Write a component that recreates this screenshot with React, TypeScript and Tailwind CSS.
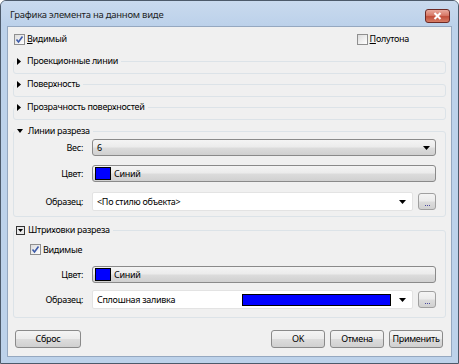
import React from "react";

const font = { fontFamily: '"Noto Sans", "Open Sans", sans-serif' };

function Check({ checked }: { checked?: boolean }) {
  return (
    <span className="inline-flex h-[11px] w-[11px] shrink-0 items-center justify-center border border-[#8f8f8f] bg-[linear-gradient(135deg,#dcdcdc,#ffffff)]">
      {checked && (
        <svg width="9" height="9" viewBox="0 0 9 9">
          <path d="M1.5 4.5 L3.5 7 L7.5 1.5" stroke="#3d5ba9" strokeWidth="1.6" fill="none" />
        </svg>
      )}
    </span>
  );
}

function Arrow() {
  return (
    <svg width="7" height="4" viewBox="0 0 7 4" className="shrink-0">
      <path d="M0 0 H7 L3.5 4 Z" fill="#000" />
    </svg>
  );
}

const btnBg =
  "bg-[linear-gradient(to_bottom,#f4f4f4_0%,#ebebeb_48%,#dcdcdc_52%,#d0d0d0_100%)] border border-[#8a8a8a] rounded-[3px]";

function Ellipsis() {
  return (
    <div className={`flex h-[17px] w-[18px] shrink-0 items-end justify-center pb-[3px] ${btnBg} border-[#a0a0a0]`}>
      <span className="flex gap-[1px]">
        <span className="h-[1px] w-[1px] bg-[#4a4aa0]" />
        <span className="h-[1px] w-[1px] bg-[#4a4aa0]" />
        <span className="h-[1px] w-[1px] bg-[#4a4aa0]" />
      </span>
    </div>
  );
}

function Label({ children }: { children: React.ReactNode }) {
  return <div className="w-[70px] shrink-0 pr-[1px] text-right">{children}</div>;
}

function Collapsed({ title, className = "" }: { title: string; className?: string }) {
  return (
    <fieldset className={`rounded-[3px] border border-[#dce3e8] ${className}`}>
      <legend className="ml-[1px] flex h-[12px] items-center pl-[2px] pr-[3px] leading-[12px]">
        <svg width="4" height="7" viewBox="0 0 4 7" className="mr-[6px]">
          <path d="M0 0 L4 3.5 L0 7 Z" fill="#000" />
        </svg>
        {title}
      </legend>
      <div className="h-[6px]" />
    </fieldset>
  );
}

export default function App() {
  return (
    <div className="h-[364px] w-[459px] text-[9px] tracking-[-0.3px] text-black" style={font}>
      <div className="flex h-full w-full flex-col rounded-t-[6px] border border-[#4d5a6a] bg-[#bdd2ea] px-[6px] pb-[6px]">
        {/* Title bar */}
        <div className="flex h-[25px] shrink-0 items-start bg-[linear-gradient(to_bottom,#c9daee,#bcd1ea)] -mx-[6px] px-[9px] rounded-t-[5px]">
          <div className="mt-[7px] text-[9.5px] leading-[14px] tracking-[-0.25px] text-[#1e1e1e]">Графика элемента на данном виде</div>
          <div className="ml-auto mr-[-1px] mt-[8px] flex h-[14px] w-[25px] items-center justify-center rounded-[3px] border border-[#6d2a25] bg-[linear-gradient(to_bottom,#e9a99c_0%,#d87a68_45%,#c24f3b_55%,#d77d66_100%)]">
            <svg width="9" height="8" viewBox="0 0 9 8">
              <path d="M1.5 1 L7.5 7 M7.5 1 L1.5 7" stroke="#fff" strokeWidth="2" />
            </svg>
          </div>
        </div>
        {/* Client */}
        <div className="flex flex-1 flex-col border border-[#95a8c0] bg-[#f0f0f0] px-[5px]">
          <div className="mt-[6px] flex h-[12px] items-center">
            <div className="ml-[1px] flex items-center gap-[2px]">
              <Check checked />
              <span>
                <span className="underline">В</span>идимый
              </span>
            </div>
            <div className="ml-auto mr-[37px] flex items-center gap-[2px]">
              <Check />
              <span>
                <span className="underline">П</span>олутона
              </span>
            </div>
          </div>

          <Collapsed title="Проекционные линии" className="mt-[10px]" />
          <Collapsed title="Поверхность" className="mt-[4px]" />
          <Collapsed title="Прозрачность поверхностей" className="mt-[4px]" />

          {/* Линии разреза */}
          <fieldset className="mt-[5px] rounded-[3px] border border-[#dce3e8]">
            <legend className="ml-[1px] flex h-[12px] items-center pl-[2px] pr-[3px] leading-[12px]">
              <svg width="6" height="4" viewBox="0 0 6 4" className="mr-[5px]">
                <path d="M0 0 H6 L3 4 Z" fill="#000" />
              </svg>
              Линии разреза
            </legend>
            <div className="flex flex-col pb-[5px] pr-[9px]">
              <div className="mt-[2px] flex h-[17px] items-center gap-[8px]">
                <Label>Вес:</Label>
                <div className={`flex h-[17px] flex-1 items-center pl-[4px] pr-[5px] ${btnBg}`}>
                  <span>6</span>
                  <span className="ml-auto">
                    <Arrow />
                  </span>
                </div>
              </div>
              <div className="mt-[9px] flex h-[17px] items-center gap-[8px]">
                <Label>Цвет:</Label>
                <div className={`flex h-[17px] flex-1 items-center pl-[2px] ${btnBg}`}>
                  <span className="h-[13px] w-[16px] border border-[#000] bg-[#0000ff]" />
                  <span className="ml-[3px]">Синий</span>
                </div>
              </div>
              <div className="mt-[10px] flex h-[19px] items-center gap-[8px]">
                <Label>Образец:</Label>
                <div className="flex h-[19px] flex-1 items-center rounded-[2px] border border-[#e3e3e3] bg-white pl-[4px] pr-[6px]">
                  <span>&lt;По стилю объекта&gt;</span>
                  <span className="ml-auto">
                    <Arrow />
                  </span>
                </div>
                <div className="-ml-[3px]">
                  <Ellipsis />
                </div>
              </div>
            </div>
          </fieldset>

          {/* Штриховки разреза */}
          <fieldset className="mt-[7px] rounded-[3px] border border-[#dce3e8]">
            <legend className="ml-[1px] flex h-[12px] items-center pl-[1px] pr-[3px] leading-[12px]">
              <span className="mr-[3px] flex h-[9px] w-[9px] items-center justify-center border border-[#333] bg-[#e8e8e8]">
                <svg width="5" height="3" viewBox="0 0 5 3">
                  <path d="M0 0 H5 L2.5 3 Z" fill="#000" />
                </svg>
              </span>
              Штриховки разреза
            </legend>
            <div className="flex flex-col pb-[8px] pr-[9px]">
              <div className="mt-[8px] flex h-[11px] items-center gap-[2px] pl-[16px]">
                <Check checked />
                <span>Видимые</span>
              </div>
              <div className="mt-[11px] flex h-[17px] items-center gap-[8px]">
                <Label>Цвет:</Label>
                <div className={`flex h-[17px] flex-1 items-center pl-[2px] ${btnBg}`}>
                  <span className="h-[13px] w-[16px] border border-[#000] bg-[#0000ff]" />
                  <span className="ml-[3px]">Синий</span>
                </div>
              </div>
              <div className="mt-[7px] flex h-[19px] items-center gap-[8px]">
                <Label>Образец:</Label>
                <div className="flex h-[19px] flex-1 items-center rounded-[2px] border border-[#e3e3e3] bg-white pl-[4px] pr-[6px]">
                  <span>Сплошная заливка</span>
                  <span className="ml-auto mr-[8px] h-[12px] w-[149px] border border-[#000] bg-[#0000ff]" />
                  <Arrow />
                </div>
                <div className="-ml-[3px]">
                  <Ellipsis />
                </div>
              </div>
            </div>
          </fieldset>

          <div className="mt-[12px] flex h-[18px] items-center pl-[2px] pr-[3px]">
            <div className={`flex h-[18px] w-[66px] items-center justify-center ${btnBg}`}>Сброс</div>
            <div className={`ml-auto flex h-[18px] w-[54px] items-center justify-center ${btnBg}`}>OK</div>
            <div className={`ml-[5px] flex h-[18px] w-[54px] items-center justify-center ${btnBg}`}>Отмена</div>
            <div className={`ml-[5px] flex h-[18px] w-[54px] items-center justify-center ${btnBg}`}>Применить</div>
          </div>
        </div>
      </div>
    </div>
  );
}
